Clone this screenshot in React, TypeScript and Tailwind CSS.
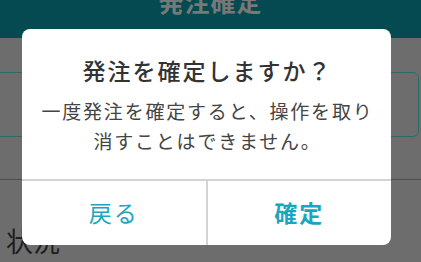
import React from "react";

const font = { fontFamily: '"Noto Sans CJK JP", "Noto Sans", sans-serif' };

export default function App() {
  return (
    <div className="relative w-[421px] h-[262px] overflow-hidden bg-[#6d6d6d]" style={font}>
      <div className="h-[38px] bg-[#064a51] flex justify-center">
        <div className="-mt-[14px] text-[25px] leading-[30px] font-bold text-[#787878] tracking-[1px]">発注確定</div>
      </div>
      <div className="h-[34px]" />
      <div className="-ml-[10px] w-[429px] h-[65px] border border-[#2d6a70] rounded-[6px]" />
      <div className="h-[42px]" />
      <div className="h-px bg-[#4d4d4d]" />
      <div className="pl-[6px] pt-[46px] text-[27px] leading-[30px] text-[#1e1e1e]">状況</div>

      <div className="absolute left-[22px] top-[29px] w-[369px] h-[216px] bg-white rounded-[8px] flex flex-col overflow-hidden">
        <div className="flex-1 flex flex-col items-center">
          <div className="mt-[26px] text-[23px] leading-[30px] font-medium text-[#333] tracking-[2px] pl-[2px]">
            発注を確定しますか？
          </div>
          <div className="mt-[11px] text-[19px] leading-[30px] text-[#444] tracking-[1.8px] text-center pl-[2px]">
            一度発注を確定すると、操作を取り
            <br />
            消すことはできません。
          </div>
        </div>
        <div className="h-[66px] border-t-2 border-[#d4d4d4] flex">
          <div className="flex-1 flex items-center justify-center pb-[2px] text-[23px] text-[#1ba6c0] tracking-[2px]">戻る</div>
          <div className="w-[2px] bg-[#d4d4d4]" />
          <div className="flex-1 flex items-center justify-center pb-[2px] text-[23px] font-bold text-[#1ba6c0] tracking-[2px]">確定</div>
        </div>
      </div>
    </div>
  );
}
